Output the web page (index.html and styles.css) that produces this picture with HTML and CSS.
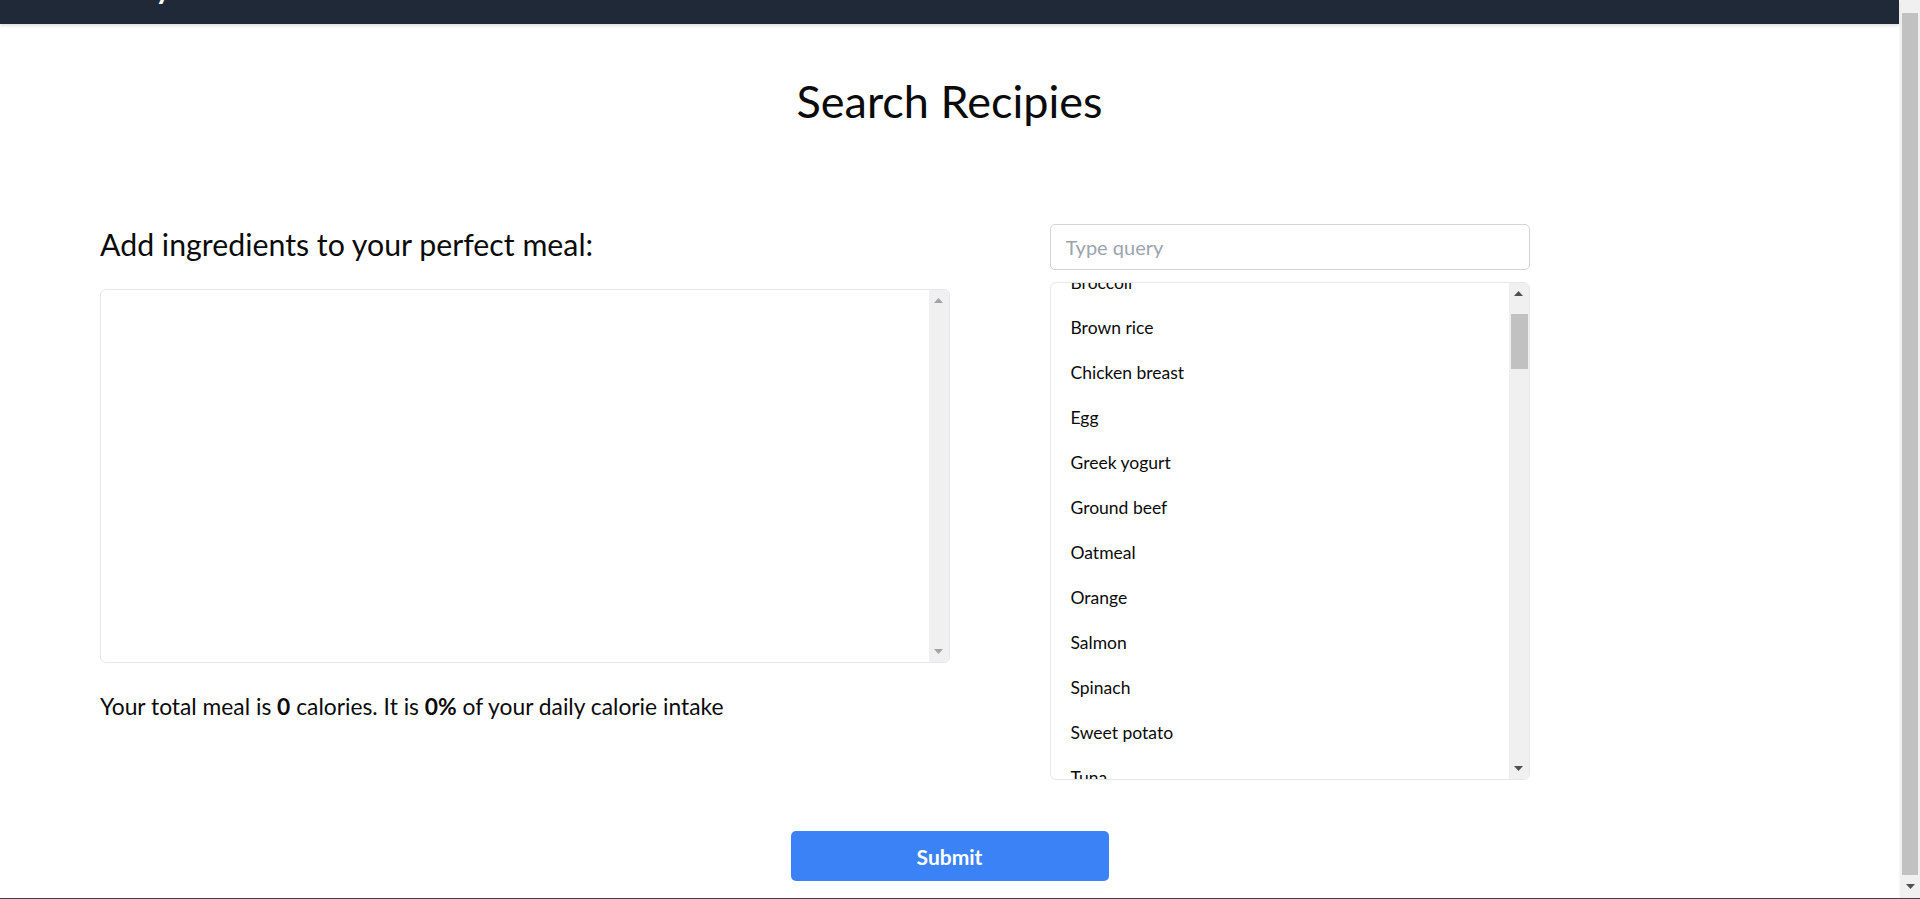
FILE: index.html
```html
<!DOCTYPE html>
<html lang="en">
<head>
<meta charset="utf-8">
<title>Search Recipies</title>
<link rel="stylesheet" href="styles.css">
</head>
<body>
<div class="page">
  <header class="topbar"><span class="brand">Easy Meals</span></header>
  <main class="main">
    <h1 class="title">Search Recipies</h1>
    <div class="columns">
      <section class="left-col">
        <h2 class="subtitle">Add ingredients to your perfect meal:</h2>
        <div class="editor">
          <textarea class="ingredients" aria-label="Ingredients"></textarea>
          <div class="vbar vbar-disabled" aria-hidden="true">
            <span class="vbar-btn"><svg width="9" height="5" viewBox="0 0 9 5"><path d="M0 5L4.5 0L9 5Z"/></svg></span>
            <span class="vbar-track"></span>
            <span class="vbar-btn"><svg width="9" height="5" viewBox="0 0 9 5"><path d="M0 0H9L4.5 5Z"/></svg></span>
          </div>
        </div>
        <p class="summary">Your total meal is <strong>0</strong> calories. It is <strong>0%</strong> of your daily calorie intake</p>
      </section>
      <section class="right-col">
        <input class="query" type="text" placeholder="Type query">
        <div class="results-box">
          <ul class="results" id="results">
            <li>Broccoli</li>
            <li>Brown rice</li>
            <li>Chicken breast</li>
            <li>Egg</li>
            <li>Greek yogurt</li>
            <li>Ground beef</li>
            <li>Oatmeal</li>
            <li>Orange</li>
            <li>Salmon</li>
            <li>Spinach</li>
            <li>Sweet potato</li>
            <li>Tuna</li>
          </ul>
          <div class="vbar" aria-hidden="true">
            <span class="vbar-btn"><svg width="9" height="5" viewBox="0 0 9 5"><path d="M0 5L4.5 0L9 5Z"/></svg></span>
            <span class="vbar-track"><span class="vbar-thumb"></span></span>
            <span class="vbar-btn"><svg width="9" height="5" viewBox="0 0 9 5"><path d="M0 0H9L4.5 5Z"/></svg></span>
          </div>
        </div>
      </section>
    </div>
    <button class="submit" type="button">Submit</button>
  </main>
</div>
<div class="page-scrollbar" aria-hidden="true">
  <div class="page-thumb"></div>
  <div class="page-arrow">
    <svg width="9" height="5" viewBox="0 0 9 5"><path d="M0 0H9L4.5 5Z" fill="#505050"/></svg>
  </div>
</div>
<script src="script.js"></script>
</body>
</html>
```
FILE: styles.css
```css
* {
  box-sizing: border-box;
}

html,
body {
  margin: 0;
  height: 100%;
}

body {
  display: flex;
  overflow: hidden;
  background: #ffffff;
  color: #0b0b0b;
  font-family: Lato, "Open Sans", "DejaVu Sans", sans-serif;
  border-bottom: 1px solid #4b3a4d;
}

.page {
  flex: 1;
  min-width: 0;
  display: flex;
  flex-direction: column;
}

.topbar {
  flex: none;
  height: 24px;
  display: flex;
  align-items: flex-end;
  padding-left: 110px;
  overflow: hidden;
  background: #1f2937;
  box-shadow: 0 2px 3px rgba(0, 0, 0, 0.12);
  position: relative;
  z-index: 1;
}

.brand {
  font-size: 30px;
  line-height: 30px;
  font-weight: 700;
  color: #ffffff;
  padding-bottom: 22px;
  white-space: nowrap;
}

.main {
  flex: 1;
  display: flex;
  flex-direction: column;
}

.title {
  margin: 52px 0 0;
  text-align: center;
  font-size: 45px;
  line-height: 50px;
  font-weight: 400;
}

.columns {
  display: flex;
  padding: 0 100px;
  margin-top: 98px;
}

.left-col {
  flex: 0 0 50%;
  display: flex;
  flex-direction: column;
}

.subtitle {
  margin: 0 0 25px;
  font-size: 30.3px;
  line-height: 40px;
  font-weight: 400;
}

.editor {
  display: flex;
  height: 374px;
  border: 1px solid #e5e7eb;
  border-radius: 6px;
  overflow: hidden;
  background: #ffffff;
}

.ingredients {
  flex: 1;
  min-width: 0;
  margin: 0;
  padding: 10px 15px;
  border: none;
  outline: none;
  resize: none;
  font: inherit;
  font-size: 20px;
  background: transparent;
}

.summary {
  margin: 26px 0 0;
  font-size: 22.8px;
  line-height: 35px;
}

.summary strong {
  font-weight: 700;
}

.right-col {
  flex: 0 0 480px;
  margin-left: 100px;
  display: flex;
  flex-direction: column;
}

.query {
  display: block;
  width: 100%;
  height: 46px;
  margin: 0;
  padding: 0 15px;
  border: 1px solid #d4d4d8;
  border-radius: 5px;
  font-family: inherit;
  font-size: 20px;
  color: #111;
  background: #ffffff;
}

.query::placeholder {
  color: #9ca3af;
}

.results-box {
  display: flex;
  height: 498px;
  margin-top: 12px;
  border: 1px solid #e5e7eb;
  border-radius: 6px;
  overflow: hidden;
}

.results {
  flex: 1;
  min-width: 0;
  list-style: none;
  margin: 0;
  padding: 0;
  overflow: hidden;
}

.results li {
  padding: 10px 20px;
  font-size: 17.5px;
  line-height: 25px;
}

/* scrollbar look-alike */
.vbar {
  flex: 0 0 20px;
  display: flex;
  flex-direction: column;
  background: #f0f0f0;
}

.vbar-btn {
  flex: 0 0 21px;
  display: flex;
  align-items: center;
  justify-content: center;
}

.vbar-btn svg {
  display: block;
  fill: #505050;
}

.vbar-disabled .vbar-btn svg {
  fill: #a3a3a3;
}

.vbar-track {
  flex: 1;
  display: flex;
  flex-direction: column;
  padding: 10px 1px 0 2px;
}

.vbar-thumb {
  flex: 0 0 55px;
  background: #c1c1c1;
}

.submit {
  align-self: center;
  width: 318px;
  height: 50px;
  margin-top: 51px;
  border: none;
  border-radius: 5px;
  background: #3b82f6;
  color: #ffffff;
  font-family: inherit;
  font-size: 21px;
  font-weight: 700;
}

/* page scrollbar look-alike */
.page-scrollbar {
  flex: 0 0 21px;
  display: flex;
  flex-direction: column;
  padding: 13px 2px 0 2px;
  background: #f0f0f0;
  border-left: 1px solid #f7f7f7;
}

.page-thumb {
  flex: 0 0 862px;
  background: #c1c1c1;
}

.page-arrow {
  flex: 1;
  display: flex;
  align-items: center;
  justify-content: center;
}

.page-arrow svg {
  display: block;
}
```
FILE: script.js
```js
document.getElementById('results').scrollTop = 23;
```
